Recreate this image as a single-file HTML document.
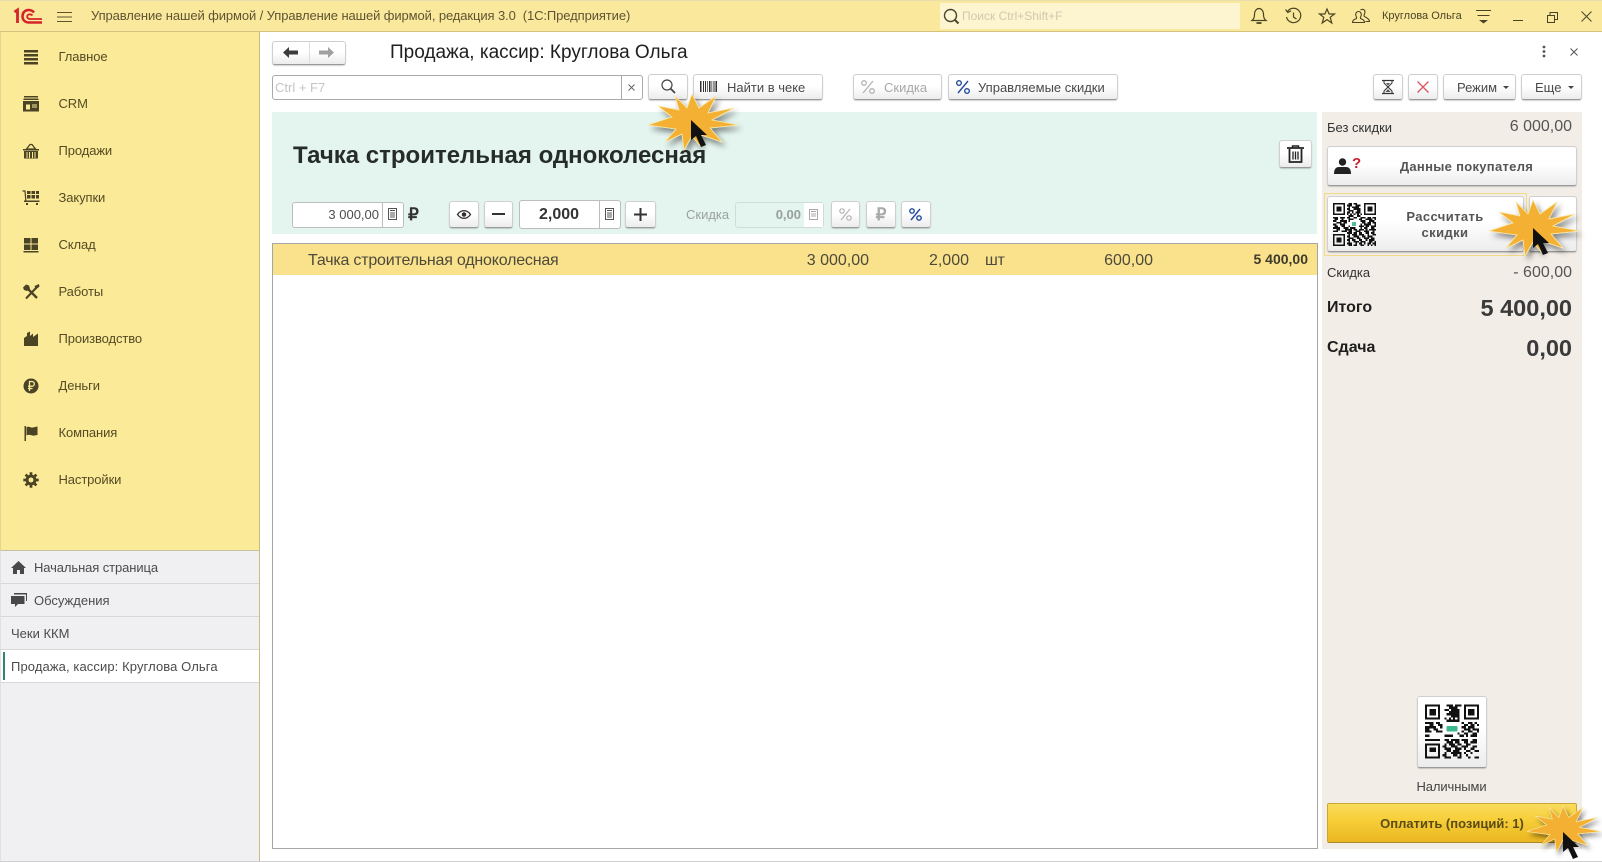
<!DOCTYPE html>
<html lang="ru"><head><meta charset="utf-8"><title>Продажа, кассир: Круглова Ольга</title>
<style>
html,body{margin:0;padding:0;background:#fff}
body{width:1602px;height:862px;position:relative;overflow:hidden;font-family:"Liberation Sans",Arial,sans-serif;color:#444;filter:blur(.3px)}
.a,.b,.t{position:absolute;box-sizing:border-box}
.t{white-space:nowrap;line-height:18px;height:18px}
.b{background:linear-gradient(#fff 0,#fff 45%,#ececec 100%);border:1px solid #cfcfcf;border-bottom-color:#9a9a9a;border-radius:3px;box-shadow:0 1px 1px rgba(0,0,0,.18);display:flex;align-items:center;justify-content:center;font-size:13px;color:#4a4a4a}
.f{background:#fff;border:1px solid #bdbdbd;border-radius:3px}
.s{font-size:13px;color:#544b24;left:58.500px;letter-spacing:-.1px}
.i{position:absolute;left:21px;width:20px;height:20px}
.tab{left:1px;width:258px;height:33px;border-bottom:1px solid #d8d8da;font-size:13px;color:#4b4b4b;line-height:33px;white-space:nowrap}
svg{display:block;overflow:visible}
</style></head><body>

<!-- top bar -->
<div class="a" style="left:0;top:0;width:1602px;height:32px;background:#fae99c;border-top:1px solid #e9dfae;border-bottom:1px solid #d3c37c"></div>
<svg class="a" style="left:12px;top:8px" width="32" height="18" viewBox="0 0 32 18" fill="none" stroke="#d5232c">
<path d="M2.500 4 5.500 2V15" stroke-width="2.800"/><path d="M22 4.500C20.500 2.600 18.800 2 16.500 2 13 2 10.500 4.600 10.500 8.200s2.500 6.300 6 6.300H30" stroke-width="2.500"/><path d="M20.500 7.500C19.500 6.400 18.200 6.200 17 6.400 15.600 6.800 15 8 15.300 9.400 15.700 10.600 17 11 18 11H30" stroke-width="1.800"/>
</svg>
<svg class="a" style="left:57px;top:11px" width="15" height="12" fill="none" stroke="#5e5330"><path d="M0 1.500h15M0 6h15M0 10.500h15"/></svg>
<div class="t" style="left:91px;top:7px;font-size:13px;letter-spacing:-.1px;color:#5d5432">Управление нашей фирмой / Управление нашей фирмой, редакция 3.0&nbsp; (1С:Предприятие)</div>
<div class="a" style="left:940px;top:3px;width:300px;height:26px;background:#fdf5d0"></div>
<svg class="a" style="left:943px;top:8px" width="17" height="17" fill="none" stroke="#4a4632" stroke-width="1.400"><circle cx="7.500" cy="7.500" r="6"/><path d="M12 12l3.500 3.500" stroke-width="2"/></svg>
<div class="t" style="left:962px;top:7px;font-size:12px;color:#cfc9ae">Поиск Ctrl+Shift+F</div>
<svg class="a" style="left:1251px;top:7px" width="16" height="18" fill="none" stroke="#4a4426" stroke-width="1.200"><path d="M1 13.500c2-1.500 2.500-3 2.500-6C3.500 4 5.500 1.500 8 1.500S12.500 4 12.500 7.500c0 3 .5 4.500 2.500 6z"/><path d="M5.500 16h5" stroke-width="1.800"/></svg>
<svg class="a" style="left:1285px;top:8px" width="17" height="17" fill="none" stroke="#4a4426" stroke-width="1.200"><path d="M2.500 3.500A7.200 7.200 0 1 1 1.500 9"/><path d="M.5 1.500 2.800 4.500 6 2.800"/><path d="M8.500 4.500v4.500l3 2"/></svg>
<svg class="a" style="left:1319px;top:8px" width="16" height="16" fill="none" stroke="#4a4426" stroke-width="1.200"><path d="M8 1l2.100 5H15.500L11.200 9.300 12.800 15 8 11.600 3.200 15 4.800 9.300 .5 6H5.900z"/></svg>
<svg class="a" style="left:1352px;top:8px" width="18" height="16" fill="none" stroke="#4a4426" stroke-width="1.100"><path d="M.5 14.500c0-2.500 2-3 4-4 .5-1 0-1.500-.5-2.500-1-2 .3-4.500 2.500-4.500S10 6 9 8c-.5 1-1 1.500-.5 2.500 2 1 4 1.500 4 4z"/><path d="M8.500 2c2-1.500 4.500-.5 4.500 2 0 1.500-1 2.500-1 4 1 1.500 5.500 2 5.500 5.500H13.500"/></svg>
<div class="t" style="left:1382px;top:7px;font-size:11px;color:#4a4426;width:82px">Круглова Ольга</div>
<svg class="a" style="left:1476px;top:9px" width="16" height="15" fill="#4a4426"><path d="M0 1h15v1H0zM1.500 6h12v1h-12zM3 11h9l-4.500 3.500z"/></svg>
<div class="a" style="left:1513px;top:20px;width:10px;height:1px;background:#4a4426"></div>
<svg class="a" style="left:1547px;top:12px" width="11" height="11" fill="none" stroke="#4a4426"><path d="M.5 3.500h7v7h-7zM3 3.500V.5h7.500v7H7.500"/></svg>
<svg class="a" style="left:1581px;top:11px" width="11" height="11" fill="none" stroke="#4a4426"><path d="M.5.500l10 10M10.500.500l-10 10"/></svg>

<!-- sidebar -->
<div class="a" style="left:0;top:32px;width:260px;height:518px;background:#fbea98;border-left:1px solid #e5d68f;border-right:1px solid #c9bb7c"></div>
<div class="t s" style="top:48px">Главное</div>
<div class="t s" style="top:95px">CRM</div>
<div class="t s" style="top:142px">Продажи</div>
<div class="t s" style="top:189px">Закупки</div>
<div class="t s" style="top:236px">Склад</div>
<div class="t s" style="top:283px">Работы</div>
<div class="t s" style="top:330px">Производство</div>
<div class="t s" style="top:377px">Деньги</div>
<div class="t s" style="top:424px">Компания</div>
<div class="t s" style="top:471px">Настройки</div>
<svg class="i" style="top:47px" viewBox="0 0 20 20" fill="#4a4324"><path d="M3 3h14v2.500H3zM3 7h14v2.500H3zM3 11h14v2.500H3zM3 15h14v2.500H3z"/></svg>
<svg class="i" style="top:94px" viewBox="0 0 20 20" fill="#4a4324"><path d="M3 2h14v1.500H3zM2.500 4.500h15V6h-15zM2 7h16v10.500H2z"/><path d="M5 10.500h4v5H5z" fill="#fbea98"/><path d="M11 10.500h5v1h-5zM11 12.500h5v1h-5z" fill="#fbea98"/></svg>
<svg class="i" style="top:141px" viewBox="0 0 20 20" fill="#4a4324"><path d="M2 8h16v1.500H2zM3 10h14v7.500H3z"/><path d="M5.500 8 9 3.500h2L14.500 8z" fill="none" stroke="#4a4324" stroke-width="1.300"/><path d="M6 11v6M8.500 11v6M11.500 11v6M14 11v6" stroke="#fbea98"/></svg>
<svg class="i" style="top:188px" viewBox="0 0 20 20" fill="#4a4324"><path d="M6 3h3.500v3H6zM10.500 3H14v3h-3.500zM15 3h3v3h-3zM6 7h3.500v3.500H6zM10.500 7H14v3.500h-3.500zM15 7h3v3.500h-3zM3 12.500h15.500V14H3zM5 15h2v2H5zM15 15h2v2h-2z"/><path d="M1.500 3H4l.8 9.500" fill="none" stroke="#4a4324" stroke-width="1.200"/></svg>
<svg class="i" style="top:235px" viewBox="0 0 20 20" fill="#4a4324"><path d="M3 3h6.500v5.500H3zM10.500 3H17v5.500h-6.500zM3 9.500h6.500V15H3zM10.500 9.500H17V15h-6.500zM2.500 16H17.500v1.500h-15z"/></svg>
<svg class="i" style="top:282px" viewBox="0 0 20 20" fill="none" stroke="#4a4324"><path d="M6 6l10 10" stroke-width="2.400"/><path d="M15 6 5 16.500" stroke-width="2"/><path d="M2 5.500 5 2.500l3 1 1 3-3 2.500-3-1zM13.500 4l4.500-2 .5 2.500-3.500 3z" fill="#4a4324" stroke="none"/></svg>
<svg class="i" style="top:329px" viewBox="0 0 20 20" fill="#4a4324"><path d="M3 17V9l3-2V4l3-1.500V7l3-2.500V8l5-3.500V17z"/></svg>
<svg class="i" style="top:376px" viewBox="0 0 20 20"><circle cx="10" cy="10" r="7.500" fill="#4a4324"/><path d="M8.500 15V5.500H11a2.300 2.300 0 0 1 0 4.700H7M7 12.500h4.500" fill="none" stroke="#fbea98" stroke-width="1.300"/></svg>
<svg class="i" style="top:423px" viewBox="0 0 20 20" fill="#4a4324"><path d="M3.500 3H5V18H3.500zM5.500 4c3-1 4 1 6.500.500 2-.4 3.500-1 4.500-1V12c-2 0-3 1-5 .5-2.500-.5-4-1-6 0z"/></svg>
<svg class="i" style="top:470px" viewBox="0 0 20 20"><path d="M10 2.300v15.400M2.300 10h15.400M4.600 4.600l10.800 10.800M15.400 4.600 4.600 15.400" stroke="#4a4324" stroke-width="2.700"/><circle cx="10" cy="10" r="5.400" fill="#4a4324"/><circle cx="10" cy="10" r="2.500" fill="#fbea98"/></svg>

<!-- bottom tabs -->
<div class="a" style="left:0;top:550px;width:260px;height:312px;background:#f0f0f3;border-left:1px solid #e0e0e0;border-right:1px solid #c9bb7c;border-top:1px solid #c6c2a8"></div>
<div class="a tab" style="top:551px;padding-left:33px;letter-spacing:-.1px">Начальная страница</div>
<div class="a tab" style="top:584px;padding-left:33px">Обсуждения</div>
<div class="a tab" style="top:617px;padding-left:10px">Чеки ККМ</div>
<div class="a tab" style="top:650px;padding-left:10px;background:#fff;letter-spacing:.1px">Продажа, кассир: Круглова Ольга</div>
<div class="a" style="left:3px;top:652px;width:2px;height:28px;background:#2f8a68"></div>
<svg class="a" style="left:11px;top:561px" width="15" height="13" fill="#484848"><path d="M7.500 0 15 7h-2v6H9V9H6v4H2V7H0z"/></svg>
<svg class="a" style="left:11px;top:593px" width="16" height="15" fill="#484848"><path d="M3 0H16V8h-1V1.500H3z"/><path d="M0 3H13.500V11H7L4 14V11H0z"/></svg>

<!-- header -->
<div class="b" style="left:272px;top:41px;width:74px;height:24px"></div>
<div class="a" style="left:309px;top:42px;width:1px;height:21px;background:#ddd"></div>
<svg class="a" style="left:283px;top:47px" width="15" height="11" fill="#3c3c3c"><path d="M0 5.500 6 0v3.500H15v4H6V11z"/></svg>
<svg class="a" style="left:319px;top:47px" width="15" height="11" fill="#a0a0a0"><path d="M15 5.500 9 0v3.500H0v4H9V11z"/></svg>
<div class="t" style="left:390px;top:42px;height:22px;line-height:22px;font-size:19px;color:#1f1f1f">Продажа, кассир: Круглова Ольга</div>
<svg class="a" style="left:1542px;top:45px" width="4" height="13" fill="#555"><circle cx="2" cy="2" r="1.400"/><circle cx="2" cy="6.500" r="1.400"/><circle cx="2" cy="11" r="1.400"/></svg>
<svg class="a" style="left:1570px;top:48px" width="8" height="8" fill="none" stroke="#555"><path d="M.5.500l7 7M7.500.500l-7 7"/></svg>

<!-- toolbar -->
<div class="a f" style="left:272px;top:75px;width:371px;height:25px;border-color:#aaa"></div>
<div class="a" style="left:621px;top:75px;width:1px;height:25px;background:#aaa"></div>
<div class="t" style="left:275px;top:79px;font-size:13px;color:#c4c4c4">Ctrl + F7</div>
<svg class="a" style="left:628px;top:84px" width="7" height="7" fill="none" stroke="#666"><path d="M.5.500l6 6M6.500.500l-6 6"/></svg>
<div class="b" style="left:648px;top:74px;width:40px;height:26px"></div>
<svg class="a" style="left:661px;top:79px" width="15" height="15" fill="none" stroke="#444" stroke-width="1.200"><circle cx="6" cy="6" r="5"/><path d="M9.500 9.500 14 14" stroke-width="1.800"/></svg>
<div class="b" style="left:693px;top:74px;width:130px;height:26px"></div>
<svg class="a" style="left:700px;top:81px" width="17" height="11" fill="#333"><path d="M0 0h1.500v11H0zM3 0h1v11H3zM5 0h1v11H5zM7 0h.700v11H7zM9 0h1.500v11H9zM11.500 0h.700v11h-.700zM13.500 0h1v11h-1zM15.500 0H17v11h-1.500z"/></svg>
<div class="t" style="left:727px;top:79px;font-size:13px;color:#4a4a4a">Найти в чеке</div>
<div class="b" style="left:853px;top:74px;width:89px;height:26px"></div>
<svg class="a" style="left:861px;top:80px" width="14" height="14" fill="none" stroke="#b4b4b4" stroke-width="1.300"><circle cx="3" cy="3" r="2.300"/><circle cx="11" cy="11" r="2.300"/><path d="M12 1 2 13"/></svg>
<div class="t" style="left:884px;top:79px;font-size:13px;color:#a8a8a8">Скидка</div>
<div class="b" style="left:948px;top:74px;width:170px;height:26px"></div>
<svg class="a" style="left:956px;top:80px" width="14" height="14" fill="none" stroke="#234a9c" stroke-width="1.400"><circle cx="3" cy="3" r="2.300"/><circle cx="11" cy="11" r="2.300"/><path d="M12 1 2 13"/></svg>
<div class="t" style="left:978px;top:79px;font-size:13px;color:#4a4a4a">Управляемые скидки</div>
<div class="b" style="left:1373px;top:74px;width:30px;height:26px"></div>
<svg class="a" style="left:1382px;top:80px" width="12" height="14" fill="none" stroke="#333"><path d="M0 .500h12M0 13.500h12" stroke-width="1.300"/><path d="M2 1v2l8 8v2M10 1v2l-8 8v2"/><path d="M4 3h4L6 5.500zM6 9l2.500 3h-5z" fill="#555" stroke="none"/></svg>
<div class="b" style="left:1408px;top:74px;width:30px;height:26px"></div>
<svg class="a" style="left:1417px;top:81px" width="12" height="12" fill="none" stroke="#dc5561" stroke-width="1.300"><path d="M.5.500l11 11M11.500.500l-11 11"/></svg>
<div class="b" style="left:1443px;top:74px;width:73px;height:26px;justify-content:flex-start;padding-left:13px">Режим</div>
<svg class="a" style="left:1503px;top:86px" width="6" height="3" fill="#444"><path d="M0 0h6L3 3z"/></svg>
<div class="b" style="left:1521px;top:74px;width:61px;height:26px;justify-content:flex-start;padding-left:13px">Еще</div>
<svg class="a" style="left:1568px;top:86px" width="6" height="3" fill="#444"><path d="M0 0h6L3 3z"/></svg>

<!-- item panel -->
<div class="a" style="left:272px;top:112px;width:1045px;height:122px;background:#e4f4ee"></div>
<div class="t" style="left:293px;top:142px;height:28px;line-height:28px;font-size:24px;font-weight:bold;color:#262c2a">Тачка строительная одноколесная</div>
<div class="b" style="left:1279px;top:140px;width:33px;height:28px"></div>
<svg class="a" style="left:1287px;top:145px" width="17" height="18" fill="none" stroke="#222"><path d="M0 3h17" stroke-width="1.800"/><path d="M5.500 3V1h6v2" stroke-width="1.400"/><path d="M2.500 4v13h12V4" stroke-width="1.800"/><path d="M6 6.500v8M8.500 6.500v8M11 6.500v8" stroke-width="1.300"/></svg>

<div class="a f" style="left:292px;top:202px;width:112px;height:26px"></div>
<div class="a" style="left:382px;top:202px;width:1px;height:26px;background:#bdbdbd"></div>
<div class="t" style="left:292px;top:206px;width:87px;text-align:right;font-size:13px;color:#4d4d4d">3 000,00</div>
<svg class="a calc" style="left:388px;top:208px" width="9" height="12" fill="none" stroke="#555"><path d="M.5.500h8v11h-8z"/><path d="M2 2.500h5M2 5h5M2 7h5M2 9h5" stroke-width="1.100"/></svg>
<div class="t" style="left:408px;top:206px;font-size:17px;font-weight:bold;color:#333">₽</div>
<div class="b" style="left:449px;top:201px;width:30px;height:27px"></div>
<svg class="a" style="left:457px;top:210px" width="14" height="9" fill="none" stroke="#333"><path d="M.5 4.500C3 1 5 .700 7 .700s4 .3 6.500 3.800C11 8 9 8.300 7 8.300S3 8 .5 4.500z" stroke-width="1.300"/><circle cx="7" cy="4.500" r="1.800" fill="#333"/></svg>
<div class="b" style="left:484px;top:201px;width:29px;height:27px"></div>
<div class="a" style="left:492px;top:213px;width:13px;height:2px;background:#333"></div>
<div class="a f" style="left:519px;top:200px;width:102px;height:29px"></div>
<div class="a" style="left:599px;top:200px;width:1px;height:29px;background:#bdbdbd"></div>
<div class="t" style="left:519px;top:205px;width:80px;height:20px;line-height:20px;text-align:center;font-size:16px;font-weight:bold;color:#333">2,000</div>
<svg class="a" style="left:605px;top:208px" width="9" height="12" fill="none" stroke="#555"><path d="M.5.500h8v11h-8z"/><path d="M2 2.500h5M2 5h5M2 7h5M2 9h5" stroke-width="1.100"/></svg>
<div class="b" style="left:625px;top:201px;width:31px;height:27px"></div>
<svg class="a" style="left:634px;top:208px" width="13" height="13" fill="#333"><path d="M5.500 0h2v13h-2zM0 5.500h13v2H0z"/></svg>
<div class="t" style="left:686px;top:206px;font-size:13px;color:#9aa39f">Скидка</div>
<div class="a" style="left:735px;top:202px;width:89px;height:26px;background:#e4f4ee;border:1px solid #cfdcd7;border-radius:3px"></div>
<div class="a" style="left:804px;top:203px;width:19px;height:24px;background:#fff"></div>
<div class="t" style="left:735px;top:206px;width:66px;text-align:right;font-size:13px;font-weight:bold;color:#97a09c">0,00</div>
<svg class="a" style="left:809px;top:209px" width="9" height="11" fill="none" stroke="#a8a8a8"><path d="M.5.500h8v10h-8z"/><path d="M2 2.500h5M2 5h5M2 7h5" /></svg>
<div class="b" style="left:831px;top:201px;width:29px;height:27px"></div>
<svg class="a" style="left:839px;top:208px" width="13" height="13" fill="none" stroke="#b4b4b4" stroke-width="1.200"><circle cx="3" cy="3" r="2.200"/><circle cx="10" cy="10" r="2.200"/><path d="M11 1 2 12"/></svg>
<div class="b" style="left:866px;top:201px;width:30px;height:27px;font-size:17px;font-weight:bold;color:#a8a8a8">₽</div>
<div class="b" style="left:901px;top:201px;width:30px;height:27px"></div>
<svg class="a" style="left:909px;top:208px" width="13" height="13" fill="none" stroke="#234a9c" stroke-width="1.400"><circle cx="3" cy="3" r="2.200"/><circle cx="10" cy="10" r="2.200"/><path d="M11 1 2 12"/></svg>

<!-- table -->
<div class="a" style="left:272px;top:243px;width:1046px;height:606px;border:1px solid #a6a6a6;background:#fff"></div>
<div class="a" style="left:273px;top:244px;width:1044px;height:31px;background:#fae28d"></div>
<div class="t" style="left:308px;top:252px;font-size:16px;letter-spacing:-.2px;color:#4d4a3a">Тачка строительная одноколесная</div>
<div class="t" style="left:769px;top:252px;width:100px;text-align:right;font-size:16px;color:#4d4a3a">3 000,00</div>
<div class="t" style="left:869px;top:252px;width:100px;text-align:right;font-size:16px;color:#4d4a3a">2,000</div>
<div class="t" style="left:985px;top:252px;font-size:16px;letter-spacing:-.3px;color:#4d4a3a">шт</div>
<div class="t" style="left:1053px;top:252px;width:100px;text-align:right;font-size:16px;color:#4d4a3a">600,00</div>
<div class="t" style="left:1208px;top:250px;width:100px;text-align:right;font-size:14px;font-weight:bold;color:#3d3a2c">5 400,00</div>

<!-- right panel -->
<div class="a" style="left:1322px;top:112px;width:260px;height:737px;background:#f2ede6"></div>
<div class="t" style="left:1327px;top:119px;font-size:13px;color:#333">Без скидки</div>
<div class="t" style="left:1472px;top:118px;width:100px;text-align:right;font-size:16px;color:#555">6 000,00</div>
<div class="b" style="left:1327px;top:146px;width:250px;height:40px;padding-left:29px;font-size:13px;font-weight:bold;color:#555;letter-spacing:.3px">Данные покупателя</div>
<svg class="a" style="left:1334px;top:158px" width="17" height="16" fill="#222"><circle cx="8.500" cy="4" r="3.700"/><path d="M0 16c0-5 2-7 5-7h7c3 0 5 2 5 7z"/></svg>
<div class="t" style="left:1352px;top:155px;font-size:15px;font-weight:bold;color:#c8202e">?</div>
<div class="a" style="left:1324px;top:193px;width:203px;height:63px;border:1px solid #efdc85"></div>
<div class="b" style="left:1327px;top:196px;width:197px;height:56px"></div>
<div class="b" style="left:1529px;top:196px;width:48px;height:56px"></div>
<div class="t" style="left:1385px;top:208px;width:120px;text-align:center;font-size:13px;font-weight:bold;color:#555;letter-spacing:.4px">Рассчитать</div>
<div class="t" style="left:1385px;top:224px;width:120px;text-align:center;font-size:13px;font-weight:bold;color:#555;letter-spacing:.4px">скидки</div>
<svg class="a" style="left:1333px;top:203px" width="43" height="43" viewBox="0 0 25 25" fill="none" stroke="#111" shape-rendering="crispEdges"><path d="M0 .5h7M9 .5h2M12 .5h2M18 .5h7M0 1.500h1M6 1.500h1M8 1.500h3M13 1.500h3M18 1.500h1M24 1.500h1M0 2.500h1M2 2.500h3M6 2.500h1M9 2.500h1M11 2.500h4M18 2.500h1M20 2.500h3M24 2.500h1M0 3.500h1M2 3.500h3M6 3.500h1M8 3.500h2M12 3.500h4M18 3.500h1M20 3.500h3M24 3.500h1M0 4.500h1M2 4.500h3M6 4.500h1M9 4.500h3M14 4.500h2M18 4.500h1M20 4.500h3M24 4.500h1M0 5.500h1M6 5.500h1M8 5.500h2M11 5.500h1M13 5.500h3M18 5.500h1M24 5.500h1M0 6.500h7M8 6.500h1M10 6.500h1M12 6.500h1M14 6.500h1M16 6.500h1M18 6.500h7M9 7.500h3M14 7.500h2M0 8.500h3M4 8.500h3M8 8.500h2M12 8.500h2M16 8.500h3M20 8.500h2M23 8.500h2M1 9.500h2M5 9.500h1M9 9.500h3M15 9.500h2M19 9.500h4M24 9.500h1M0 10.500h2M4 10.500h4M9 10.500h1M16 10.500h3M21 10.500h3M2 11.500h3M6 11.500h2M17 11.500h2M20 11.500h2M23 11.500h2M0 12.500h2M4 12.500h3M16 12.500h1M18 12.500h4M24 12.500h1M1 13.500h2M5 13.500h2M9 13.500h1M15 13.500h3M19 13.500h2M22 13.500h3M0 14.500h4M6 14.500h3M10 14.500h3M16 14.500h1M18 14.500h2M22 14.500h2M2 15.500h2M7 15.500h4M12 15.500h2M15 15.500h3M19 15.500h1M21 15.500h4M0 16.500h3M5 16.500h3M9 16.500h2M13 16.500h3M18 16.500h3M23 16.500h1M8 17.500h3M12 17.500h2M15 17.500h2M19 17.500h2M22 17.500h2M0 18.500h7M9 18.500h1M11 18.500h3M15 18.500h3M20 18.500h1M23 18.500h2M0 19.500h1M6 19.500h1M8 19.500h2M12 19.500h3M17 19.500h2M20 19.500h3M0 20.500h1M2 20.500h3M6 20.500h1M9 20.500h3M14 20.500h2M18 20.500h3M22 20.500h2M0 21.500h1M2 21.500h3M6 21.500h1M8 21.500h2M11 21.500h2M15 21.500h2M19 21.500h1M21 21.500h3M0 22.500h1M2 22.500h3M6 22.500h1M9 22.500h1M12 22.500h3M16 22.500h3M21 22.500h2M24 22.500h1M0 23.500h1M6 23.500h1M8 23.500h3M13 23.500h1M15 23.500h2M18 23.500h1M20 23.500h2M23 23.500h2M0 24.500h7M9 24.500h2M12 24.500h2M16 24.500h2M20 24.500h1M22 24.500h1M24 24.500h1"/><rect x="11" y="11" width="2.500" height="2.500" fill="#4fbf9f" stroke="none"/></svg>
<div class="t" style="left:1327px;top:264px;font-size:13px;color:#333">Скидка</div>
<div class="t" style="left:1472px;top:264px;width:100px;text-align:right;font-size:16px;color:#555">- 600,00</div>
<div class="t" style="left:1327px;top:298px;height:20px;line-height:20px;font-size:16px;font-weight:bold;color:#1e1e1e">Итого</div>
<div class="t" style="left:1442px;top:294px;height:28px;line-height:28px;width:130px;text-align:right;font-size:23.500px;font-weight:bold;color:#3a3a3a">5 400,00</div>
<div class="t" style="left:1327px;top:338px;height:20px;line-height:20px;font-size:16px;font-weight:bold;color:#1e1e1e">Сдача</div>
<div class="t" style="left:1442px;top:334px;height:28px;line-height:28px;width:130px;text-align:right;font-size:23.500px;font-weight:bold;color:#3a3a3a">0,00</div>

<div class="b" style="left:1417px;top:696px;width:70px;height:72px"></div>
<svg class="a" style="left:1425px;top:704px" width="54" height="55" viewBox="0 0 25 25" fill="none" stroke="#111" shape-rendering="crispEdges"><path d="M0 .5h7M10 .5h3M14 .5h3M18 .5h7M0 1.500h1M6 1.500h1M11 1.500h4M18 1.500h1M24 1.500h1M0 2.500h1M2 2.500h3M6 2.500h1M9 2.500h2M12 2.500h4M18 2.500h1M20 2.500h3M24 2.500h1M0 3.500h1M2 3.500h3M6 3.500h1M11 3.500h5M18 3.500h1M20 3.500h3M24 3.500h1M0 4.500h1M2 4.500h3M6 4.500h1M10 4.500h6M18 4.500h1M20 4.500h3M24 4.500h1M0 5.500h1M6 5.500h1M12 5.500h4M18 5.500h1M24 5.500h1M0 6.500h7M9 6.500h1M11 6.500h1M13 6.500h1M15 6.500h1M18 6.500h7M10 7.500h6M0 8.500h4M5 8.500h2M17 8.500h1M20 8.500h2M23 8.500h1M2 9.500h2M6 9.500h2M18 9.500h2M21 9.500h2M24 9.500h1M0 10.500h5M7 10.500h1M17 10.500h2M20 10.500h3M0 11.500h2M4 11.500h2M18 11.500h3M22 11.500h3M0 12.500h3M5 12.500h3M17 12.500h1M20 12.500h2M24 12.500h1M15 13.500h1M18 13.500h2M22 13.500h2M0 14.500h2M9 14.500h4M16 14.500h2M19 14.500h1M21 14.500h3M0 18.500h7M9 18.500h1M11 18.500h3M15 18.500h2M19 18.500h2M0 16.500h7M9 16.500h2M12 16.500h4M17 16.500h3M22 16.500h2M10 17.500h3M14 17.500h2M18 17.500h2M21 17.500h3M0 19.500h1M6 19.500h1M8 19.500h2M12 19.500h3M17 19.500h3M22 19.500h2M0 20.500h1M2 20.500h3M6 20.500h1M9 20.500h3M14 20.500h3M18 20.500h1M21 20.500h2M0 21.500h1M2 21.500h3M6 21.500h1M10 21.500h2M13 21.500h3M19 21.500h2M23 21.500h2M0 22.500h1M6 22.500h1M9 22.500h1M12 22.500h5M18 22.500h1M21 22.500h1M0 23.500h1M6 23.500h1M8 23.500h2M13 23.500h2M16 23.500h1M19 23.500h1M0 24.500h7M9 24.500h3M15 24.500h2M20 24.500h1M23 24.500h2"/><rect x="10" y="10" width="5" height="2.500" rx=".5" fill="#3cb890" stroke="none"/></svg>
<div class="t" style="left:1401.500px;top:778px;width:100px;text-align:center;font-size:13px;letter-spacing:-.1px;color:#444">Наличными</div>
<div class="a" style="left:1327px;top:803px;width:250px;height:40px;border:1px solid #c9a832;border-bottom-color:#a8882a;border-radius:2px;background:linear-gradient(#f9db5e 0,#f7cf3a 40%,#eab620 100%)"></div>
<div class="t" style="left:1327px;top:815px;width:250px;text-align:center;font-size:13px;font-weight:bold;color:#5b4c14">Оплатить (позиций: 1)</div>

<!-- page bottom line -->
<div class="a" style="left:260px;top:861px;width:1342px;height:1px;background:#d0d0d0"></div>
<div class="a" style="left:0;top:861px;width:260px;height:1px;background:#d0d0d0"></div>

<!-- bursts -->
<svg class="a" style="left:0;top:0;pointer-events:none" width="1602" height="862">
<defs>
<filter id="sh" x="-30%" y="-30%" width="170%" height="170%"><feDropShadow dx="3" dy="4" stdDeviation="3" flood-color="#000" flood-opacity=".45"/></filter>
<g id="burst"><polygon filter="url(#sh)" fill="#f4b031" stroke="#f8e8a6" stroke-width=".8" points="0,-28 7,-14 24,-26 16,-9 42,-14 20,-2 46,3 18,6 30,20 9,13 8,24 0,14 -8,28 -10,12 -27,20 -16,7 -44,3 -20,-5 -34,-16 -13,-12 -17,-26 -5,-14"/></g>
<path id="cur" d="M0 0 0 20 5 16 10 27 15 25 10 15 16 15z" fill="#111"/>
</defs>
<use href="#burst" x="692" y="122"/><use href="#cur" transform="translate(691 120)"/>
<use href="#burst" x="1533" y="228"/><use href="#cur" transform="translate(1533 228)"/>
<g transform="translate(1563 829) scale(.82)"><use href="#burst"/></g><use href="#cur" transform="translate(1563 832)"/>
</svg>
</body></html>
